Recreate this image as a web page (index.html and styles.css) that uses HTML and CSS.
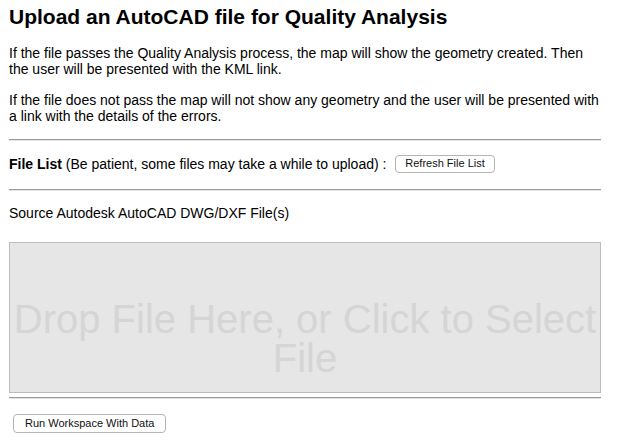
FILE: index.html
```html
<!DOCTYPE html>
<html>
<head>
<meta charset="utf-8">
<title>Upload an AutoCAD file for Quality Analysis</title>
<link rel="stylesheet" href="styles.css">
</head>
<body>
<div class="page">
  <h1 class="title">Upload an AutoCAD file for Quality Analysis</h1>
  <p class="para">If the file passes the Quality Analysis process, the map will show the geometry created. Then the user will be presented with the KML link.</p>
  <p class="para">If the file does not pass the map will not show any geometry and the user will be presented with a link with the details of the errors.</p>
  <hr class="rule">
  <div class="file-list"><span class="label">File List</span> (Be patient, some files may take a while to upload) : <button class="btn btn-refresh" type="button">Refresh File List</button></div>
  <hr class="rule">
  <div class="source">Source Autodesk AutoCAD DWG/DXF File(s)</div>
  <div class="dropzone">Drop File Here, or Click to Select File</div>
  <hr class="rule rule-bottom">
  <div class="actions">
    <button class="btn btn-run" type="button">Run Workspace With Data</button>
  </div>
</div>
</body>
</html>
```

FILE: styles.css
```css
html, body {
  margin: 0;
  padding: 0;
  background: #ffffff;
}

body {
  font-family: "Liberation Sans", Arial, Helvetica, sans-serif;
  color: #000000;
  font-size: 14px;
}

.page {
  width: 592px;
  padding: 5px 0 0 9px;
}

.title {
  font-size: 21px;
  line-height: 24px;
  font-weight: bold;
  margin: 0 0 16px 0;
}

.para {
  margin: 0 0 15px 0;
  line-height: 16px;
}

.rule {
  border: 0;
  border-top: 1px solid #9a9a9a;
  border-bottom: 1px solid #e4e4e4;
  margin: 0;
  height: 0;
}

.file-list {
  height: 18px;
  padding: 14px 0 16px 0;
  line-height: 18px;
}

.label {
  font-weight: bold;
}

.btn {
  font-family: "Liberation Sans", Arial, Helvetica, sans-serif;
  font-size: 11px;
  line-height: 13px;
  background: #ffffff;
  color: #111111;
  border: 1px solid #b5b5b5;
  border-radius: 4px;
  padding: 1px 9px 2px 9px;
  margin: 0;
  vertical-align: middle;
}

.btn-refresh {
  margin-left: 5px;
  position: relative;
  top: -1px;
}

.source {
  padding: 14px 0 21px 0;
  line-height: 16px;
}

.dropzone {
  height: 151px;
  box-sizing: border-box;
  background: #e6e6e6;
  border: 1px solid #bdbdbd;
  color: #d5d5d5;
  font-size: 40px;
  line-height: 39px;
  text-align: center;
  padding-top: 57px;
  margin-bottom: 4px;
}

.actions {
  padding: 15px 0 0 4px;
}

.btn-run {
  padding: 2px 11px 2px 11px;
}
```
